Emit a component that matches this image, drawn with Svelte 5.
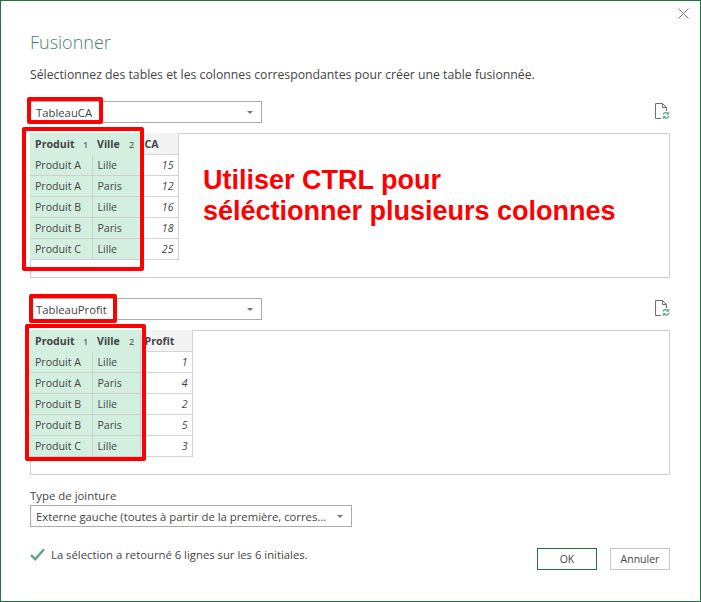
<script>
	const rowsCa = [
		['Produit A', 'Lille', 15],
		['Produit A', 'Paris', 12],
		['Produit B', 'Lille', 16],
		['Produit B', 'Paris', 18],
		['Produit C', 'Lille', 25]
	];
	const rowsProfit = [
		['Produit A', 'Lille', 1],
		['Produit A', 'Paris', 4],
		['Produit B', 'Lille', 2],
		['Produit B', 'Paris', 5],
		['Produit C', 'Lille', 3]
	];
	const tables = [
		{ name: 'TableauCA', col: 'CA', width: 38, rows: rowsCa },
		{ name: 'TableauProfit', col: 'Profit', width: 52, rows: rowsProfit }
	];
</script>

<div class="dialog">
	<button class="close" aria-label="Fermer">
		<svg width="11" height="11" viewBox="0 0 11 11"><path d="M0.5 0.5L10.5 10.5M10.5 0.5L0.5 10.5" stroke="#777" stroke-width="1" fill="none" /></svg>
	</button>

	<h1>Fusionner</h1>
	<p class="desc">Sélectionnez des tables et les colonnes correspondantes pour créer une table fusionnée.</p>

	{#each tables as t, i}
		<div class="source" class:first={i === 0}>
			<div class="select-row">
				<div class="select">
					<span>{t.name}</span>
					<i class="caret"></i>
				</div>
				<svg class="refresh" width="15" height="17" viewBox="0 0 15 17">
					<path d="M0.5 15.5V0.5H7.5L11.5 4.5V8M7.5 0.5V4.5H11.5M0.5 15.5H6" stroke="#6e6e6e" fill="none" />
					<path d="M8 11.5A3 3 0 0 1 13 10.5M14 13A3 3 0 0 1 9 14.2" stroke="#5aa583" stroke-width="1.3" fill="none" />
					<path d="M13.8 8.6V11.2H11.4M8.2 16V13.4H10.6" stroke="#5aa583" fill="none" />
				</svg>
			</div>
			<div class="preview">
				<table style="width: {110 + t.width}px">
					<thead>
						<tr>
							<th class="sel c1"><span>Produit</span><em>1</em></th>
							<th class="sel c2"><span>Ville</span><em>2</em></th>
							<th class="c3" style="width: {t.width}px">{t.col}</th>
						</tr>
					</thead>
					<tbody>
						{#each t.rows as r}
							<tr>
								<td class="sel">{r[0]}</td>
								<td class="sel">{r[1]}</td>
								<td class="num">{r[2]}</td>
							</tr>
						{/each}
					</tbody>
				</table>
			</div>
			<div class="mark mark-select"></div>
			<div class="mark mark-cols"></div>
		</div>
	{/each}

	<p class="hint">Utiliser CTRL pour<br />séléctionner plusieurs colonnes</p>

	<label class="join-label" for="join">Type de jointure</label>
	<div class="select wide" id="join">
		<span>Externe gauche (toutes à partir de la première, corres...</span>
		<i class="caret"></i>
	</div>

	<div class="footer">
		<div class="status">
			<svg width="15" height="13" viewBox="0 0 15 13"><path d="M1 7L5.2 11.2L14 1.2" stroke="#5aa583" stroke-width="2.4" fill="none" /></svg>
			<span>La sélection a retourné 6 lignes sur les 6 initiales.</span>
		</div>
		<div class="buttons">
			<button class="btn ok">OK</button>
			<button class="btn">Annuler</button>
		</div>
	</div>
</div>

<style>
	:global(body) {
		margin: 0;
		background: #fff;
	}

	.dialog {
		position: relative;
		box-sizing: border-box;
		width: 701px;
		height: 602px;
		padding: 29px 30px 0 29px;
		border: 1px solid #217346;
		font-family: 'Open Sans', 'Noto Sans', sans-serif;
		font-size: 11px;
		color: #444;
		background: #fff;
	}

	.close {
		position: absolute;
		top: 7px;
		right: 11px;
		width: 11px;
		height: 11px;
		padding: 0;
		border: none;
		background: none;
		line-height: 0;
	}

	h1 {
		margin: 0;
		font-size: 18px;
		line-height: 24px;
		font-weight: 300;
		color: #4d7f72;
	}

	.desc {
		margin: 13px 0 0;
		font-size: 12.25px;
		line-height: 16px;
	}

	.source {
		position: relative;
		margin-top: 20px;
	}

	.source.first {
		margin-top: 18px;
	}

	.select-row {
		display: flex;
		justify-content: space-between;
		align-items: flex-start;
	}

	.refresh {
		margin-top: 2px;
	}

	.select {
		box-sizing: border-box;
		display: flex;
		align-items: center;
		justify-content: space-between;
		width: 232px;
		height: 22px;
		padding: 0 8px 0 5px;
		border: 1px solid #ababab;
		font-size: 11.3px;
	}

	.select.wide {
		width: 322px;
	}

	.caret {
		width: 0;
		height: 0;
		border-left: 3px solid transparent;
		border-right: 3px solid transparent;
		border-top: 3px solid #777;
	}

	.preview {
		box-sizing: border-box;
		height: 145px;
		margin-top: 10px;
		border: 1px solid #d0d0d0;
	}

	table {
		margin: -1px 0 0 -1px;
		border-collapse: collapse;
		table-layout: fixed;
		font-size: 10.6px;
	}

	th,
	td {
		box-sizing: border-box;
		height: 21px;
		padding: 0 5px;
		border: 1px solid #d4d4d4;
		text-align: left;
		white-space: nowrap;
	}

	th {
		padding-top: 1px;
		font-weight: 700;
		background: #f3f3f3;
		border-top: none;
	}

	th.sel {
		background: #d3efe0;
		border-left: none;
		border-right: none;
		border-bottom-color: #d3efe0;
	}

	th.c1 {
		width: 62px;
	}

	th.c2 {
		width: 48px;
	}

	th.c3 {
		padding-left: 4px;
	}

	th span {
		display: inline-block;
		width: 48px;
	}

	th.c2 span {
		width: 32px;
	}

	th em {
		font-style: normal;
		font-weight: 600;
		font-size: 9px;
		color: #666;
	}

	td.sel {
		background: #d3efe0;
		border-color: #cfcfcf;
	}

	tbody tr:first-child td.sel {
		border-top-color: #d3efe0;
	}

	td:first-child {
		border-left: none;
	}

	td.num {
		padding-right: 4px;
		text-align: right;
		font-style: italic;
	}

	.mark {
		position: absolute;
		box-sizing: border-box;
		border: 4px solid #f00;
		border-radius: 2px;
	}

	.mark-select {
		top: -4px;
		left: -3px;
		width: 76px;
		height: 27px;
	}

	.mark-cols {
		top: 26px;
		left: -8px;
		width: 122px;
		height: 144px;
	}

	.source:not(.first) .mark-select {
		left: -1px;
		width: 88px;
		height: 29px;
	}

	.source:not(.first) .mark-cols {
		left: -5px;
		width: 121px;
		height: 137px;
	}

	.hint {
		position: absolute;
		top: 164px;
		left: 202px;
		margin: 0;
		font-family: 'Liberation Sans', Arial, sans-serif;
		font-size: 27px;
		line-height: 31px;
		font-weight: 700;
		color: #f00;
	}

	.join-label {
		display: block;
		margin-top: 13px;
		font-size: 11.4px;
		line-height: 16px;
	}

	.select#join {
		margin-top: 1px;
	}

	.footer {
		display: flex;
		justify-content: space-between;
		align-items: flex-start;
		margin-top: 21px;
	}

	.status {
		display: flex;
		align-items: center;
		gap: 6px;
		margin-top: -1px;
		font-size: 11.3px;
	}

	.buttons {
		display: flex;
		gap: 13px;
	}

	.btn {
		box-sizing: border-box;
		width: 60px;
		height: 22px;
		padding: 0;
		border: 1px solid #c6c6c6;
		background: #fff;
		font-family: inherit;
		font-size: 10.5px;
		color: #444;
	}

	.btn.ok {
		border-color: #217346;
	}
</style>
